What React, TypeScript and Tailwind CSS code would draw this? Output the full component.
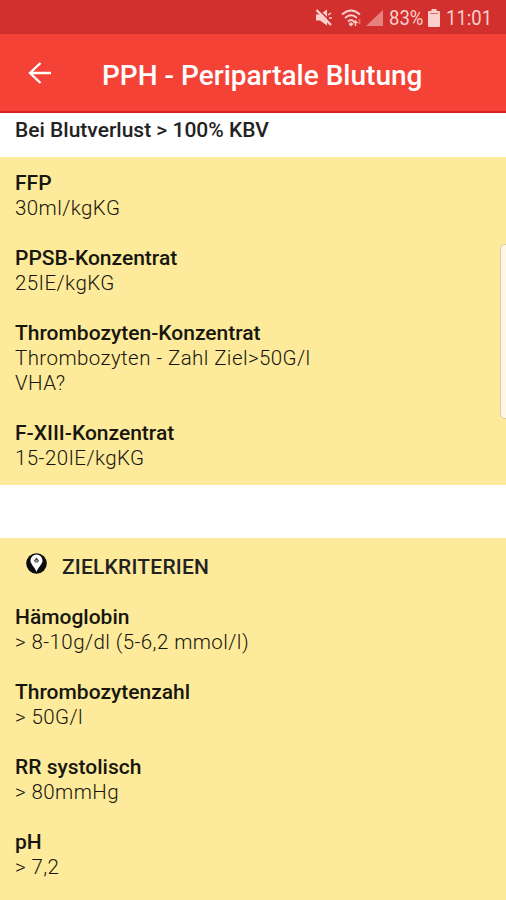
import React from "react";

type Entry = { title: string; values: string[] };

const products: Entry[] = [
  { title: "FFP", values: ["30ml/kgKG"] },
  { title: "PPSB-Konzentrat", values: ["25IE/kgKG"] },
  { title: "Thrombozyten-Konzentrat", values: ["Thrombozyten - Zahl Ziel>50G/l", "VHA?"] },
  { title: "F-XIII-Konzentrat", values: ["15-20IE/kgKG"] },
];

const targets: Entry[] = [
  { title: "Hämoglobin", values: ["> 8-10g/dl (5-6,2 mmol/l)"] },
  { title: "Thrombozytenzahl", values: ["> 50G/l"] },
  { title: "RR systolisch", values: ["> 80mmHg"] },
  { title: "pH", values: ["> 7,2"] },
];

const StatusBar = () => (
  <div className="h-[34px] shrink-0 bg-[#d22f2f] text-[#fbd0cc] flex items-center justify-end pr-[14px] pt-[2px]">
    {/* Muted */}
    <svg className="w-[18px] h-[18px] mr-[8px]" viewBox="0 0 18 18">
      <path d="M1 5.500h4l7-5v16l-7-5H1z" fill="currentColor" />
      <path d="M3.500 0.500l14 14" stroke="#d22f2f" strokeWidth="1.6" />
      <path d="M1.500 1l14.500 15" stroke="currentColor" strokeWidth="2.4" />
      <path d="M13 6l3-2M14 9h3" stroke="currentColor" strokeWidth="1.5" />
    </svg>
    {/* Wifi */}
    <svg className="w-[22px] h-[18px] mr-[3px]" viewBox="0 0 22 18" fill="none" stroke="currentColor" strokeWidth="1.8">
      <path d="M1 5.500q9-8 18 0M4 9q6-5.500 12 0M7 12.500q3-3 6 0" />
      <path d="M10 13v4M8 14.500l2 2 2-2M14.500 17v-5M12.500 14l2-2 2 2" strokeWidth="1.4" />
      <path d="M18.500 10v5" stroke="#ed6c65" strokeWidth="2" />
    </svg>
    {/* Signal */}
    <svg className="w-[17px] h-[18px] mr-[6px]" viewBox="0 0 17 18">
      <path d="M17 1v16H0z" fill="#e8817d" />
    </svg>
    <span className="w-[34px] text-[21px] leading-none whitespace-nowrap origin-left scale-x-[.88]">83%</span>
    {/* Battery */}
    <svg className="w-[12px] h-[18px] ml-[5px] mr-[6px]" viewBox="0 0 12 18" fill="currentColor">
      <path d="M3.500 0h5v2H11a1 1 0 0 1 1 1v14a1 1 0 0 1-1 1H1a1 1 0 0 1-1-1V3a1 1 0 0 1 1-1h2.500z" />
      <path d="M2 4.500h8" stroke="#d96a66" strokeWidth="1" />
    </svg>
    <span className="w-[46px] text-[21px] leading-none whitespace-nowrap origin-left scale-x-[.88]">11:01</span>
  </div>
);

const EntryList = ({ entries }: { entries: Entry[] }) => (
  <div className="flex flex-col gap-[25px]">
    {entries.map((entry) => (
      <div key={entry.title}>
        <h3 className="text-[21px] leading-[25px] font-medium text-[#17160f]">{entry.title}</h3>
        {entry.values.map((value) => (
          <p key={value} className="text-[20.5px] leading-[25px] font-light tracking-[.42px] text-[#17150c]">
            {value}
          </p>
        ))}
      </div>
    ))}
  </div>
);

const App = () => {
  return (
    <div className="relative w-[506px] h-[900px] overflow-hidden flex flex-col bg-white font-[Roboto,sans-serif]">
      <StatusBar />
      <header className="h-[79px] shrink-0 bg-[#f44336] border-b-2 border-[#d6231c] flex items-center pl-[28px] text-white">
        <svg className="w-[24px] h-[24px] mt-[1px]" viewBox="0 0 24 24" fill="none" stroke="currentColor" strokeWidth="2.4">
          <path d="M12.500 2L2 12l10.500 10M2 12h21" />
        </svg>
        <h1 className="ml-[50px] mt-[6px] text-[28px] font-medium leading-none whitespace-nowrap">PPH - Peripartale Blutung</h1>
      </header>

      <h2 className="h-[44px] shrink-0 px-[15px] pt-[5px] text-[21px] leading-[25px] font-medium text-[#222]">
        Bei Blutverlust &gt; 100% KBV
      </h2>

      <section className="shrink-0 bg-[#fdea9b] px-[15px] py-[14px]">
        <EntryList entries={products} />
      </section>

      <section className="mt-[53px] grow bg-[#fdea9b] px-[15px] pt-[14px]">
        <div className="h-[53px] flex items-start pl-[11px]">
          <svg className="w-[21px] h-[21px] mt-[1px]" viewBox="0 0 21 21">
            <circle cx="10.500" cy="10.500" r="10.300" fill="#0c0c0c" />
            <path d="M10.500 19C9 14 4.500 11.500 4.500 7.500a6 6 0 0 1 12 0C16.500 11.500 12 14 10.500 19z" fill="#fff" />
            <path d="M8 7.500l2.500-3 2.500 3-1 2H9z" fill="#444" />
            <path d="M9.500 8h2" stroke="#fff" />
          </svg>
          <h2 className="ml-[15px] mt-[3px] text-[21px] leading-[25px] font-medium tracking-[.2px] text-[#222]">ZIELKRITERIEN</h2>
        </div>
        <EntryList entries={targets} />
      </section>

      {/* Edge panel handle, hangs over the right side */}
      <div className="absolute top-[244px] -right-[8px] w-[14px] h-[175px] rounded-[5px] border border-[#d8ceaa] bg-[#fdf7e3]" />
    </div>
  );
};

export default App;
